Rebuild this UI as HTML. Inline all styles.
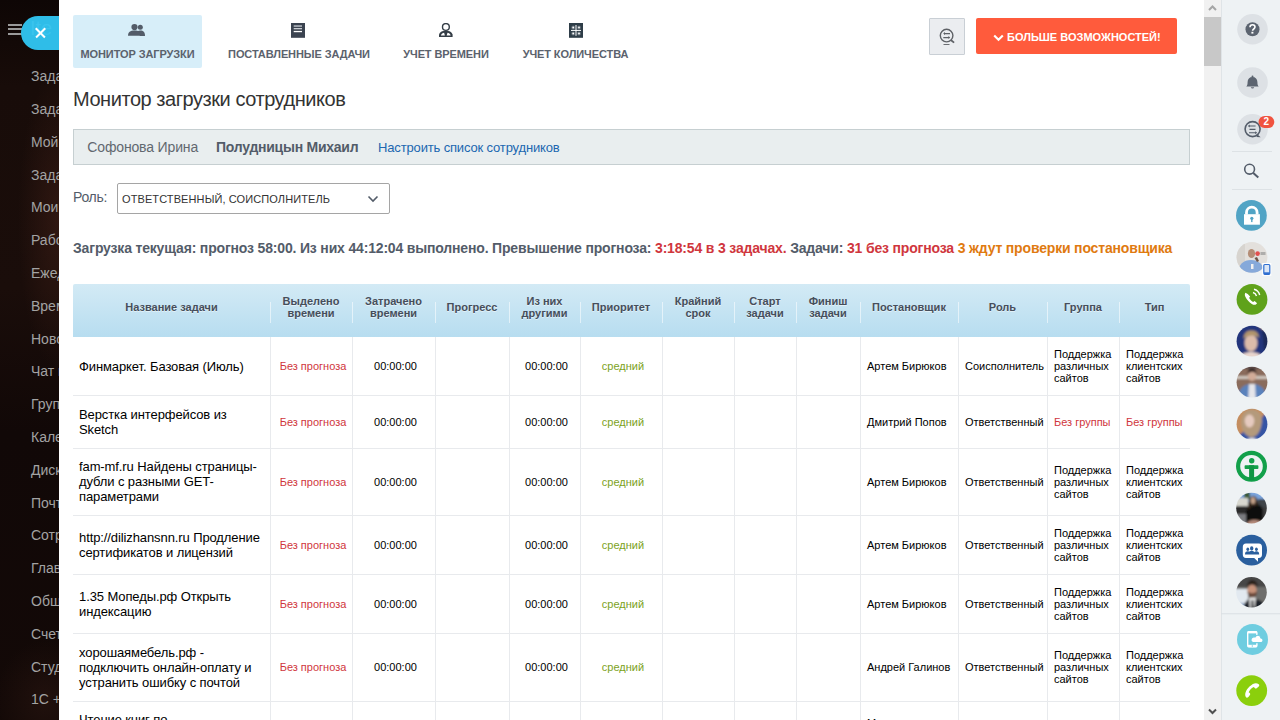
<!DOCTYPE html>
<html><head><meta charset="utf-8">
<style>
*{margin:0;padding:0;box-sizing:border-box}
html,body{width:1280px;height:720px;overflow:hidden}
body{font-family:"Liberation Sans",sans-serif;background:#130907;position:relative;color:#333}
.bg{position:absolute;left:0;top:0;width:60px;height:720px;background:radial-gradient(ellipse 40px 150px at 58px 220px,rgba(62,30,22,.6),rgba(62,30,22,0) 100%),radial-gradient(ellipse 50px 60px at 45px 700px,rgba(50,26,20,.45),rgba(50,26,20,0) 100%),linear-gradient(#0e0605 0,#180c09 12%,#1a0d0a 40%,#110807 60%,#130907 100%)}
.menu{position:absolute;left:31px;top:0;color:#a3a3a3;font-size:14px}
.menu div{position:absolute;left:0;white-space:nowrap}
.ham{position:absolute;left:8px;width:14px;height:2px;background:#9a9a9a}
.pill{position:absolute;left:21px;top:16px;width:40px;height:34px;border-radius:17px 0 0 17px;background:#2fbde8;overflow:hidden}
.pill i{position:absolute;left:9px;top:1px;font-style:normal;font-size:20px;color:#3ac4ee;letter-spacing:0px}
.pill:before,.pill:after{content:"";position:absolute;z-index:2;left:12.5px;top:16.1px;width:13px;height:1.5px;background:#fff}
.pill:before{transform:rotate(45deg)}
.pill:after{transform:rotate(-45deg)}
.panel{position:absolute;left:0;top:0;width:1204px;height:720px;clip-path:inset(0 0 0 59px);background:#fff}
.panel:before{content:"";position:absolute;left:0;top:0;width:59px;height:720px}
.sb{position:absolute;left:1204px;top:0;width:17px;height:720px;background:#f1f1f1}
.sbthumb{position:absolute;left:1204px;top:17px;width:17px;height:49px;background:#c8c8c8}
.right{position:absolute;left:1221px;top:0;width:59px;height:720px;background:#eef2f4;border-left:1px solid #dfe4e7}
.abs{position:absolute}
.tab{position:absolute;top:15px;height:53px;text-align:center;font-size:11px;letter-spacing:-0.1px;font-weight:bold;color:#5b626d;white-space:nowrap}
.tab.act{background:#d7eef9;border-radius:2px}
.tab .lbl{position:absolute;left:-20px;right:-20px;top:33px}
.title{position:absolute;left:73px;top:88px;font-size:20px;letter-spacing:-0.45px;color:#333;white-space:nowrap}
.ubar{position:absolute;left:73px;top:129px;width:1117px;height:36px;background:#e9eeef;border:1px solid #c6cfd1}
.ubar span{position:absolute;top:9px;font-size:14px;white-space:nowrap}
.role{position:absolute;left:73px;top:188.5px;font-size:14px;letter-spacing:-0.3px;color:#535c69}
.sel{position:absolute;left:117px;top:183px;width:273px;height:31px;border:1px solid #a5a5a5;border-radius:2px;background:#fff;font-size:11px;letter-spacing:0.1px;color:#333}
.stat{position:absolute;left:73px;top:240px;font-size:14px;letter-spacing:-0.17px;font-weight:bold;color:#535c69;white-space:nowrap}
.thead{position:absolute;left:73px;top:284px;width:1117px;height:53px;border-radius:2px 2px 0 0;background:linear-gradient(#d3eaf5,#b7ddf0)}
.th{position:absolute;top:284px;height:53px;padding-bottom:7px;text-shadow:0 1px 0 rgba(255,255,255,.5);display:flex;align-items:center;justify-content:center;text-align:center;font-size:11px;font-weight:bold;color:#464e5b;line-height:12px}
.thdiv{position:absolute;top:302px;width:1px;height:21px;background:rgba(255,255,255,.55)}
.td{position:absolute;display:flex;align-items:center;justify-content:center;text-align:center;font-size:11px;color:#000;line-height:12px;padding-left:4px}
.td.name{justify-content:flex-start;text-align:left;padding-left:6px;padding-right:4px;font-size:13px;line-height:15px;letter-spacing:-0.1px}
.td.red{color:#d0363d}
.td.time{color:#000}
.td.green{color:#7ca21c}
.td.grp{justify-content:flex-start;text-align:left;padding-left:7px;padding-right:2px}
.td.l{justify-content:flex-start;padding-left:7px}
.td.pers{justify-content:flex-start;text-align:left;padding-left:7px}
.td.pers2{justify-content:flex-start;text-align:left;padding-left:6px}
.rowline{position:absolute;left:73px;width:1117px;height:1px;background:#e8eaed}
.vline{position:absolute;top:337px;width:1px;height:400px;background:#e8eaed}

</style></head><body>
<div class="bg"></div>
<div class="menu">
<div style="top:68.1px">Задачи</div>
<div style="top:100.9px">Задачи</div>
<div style="top:133.7px">Мой диск</div>
<div style="top:166.5px">Задачи</div>
<div style="top:199.3px">Мои сделки</div>
<div style="top:232.1px">Работа</div>
<div style="top:264.9px">Ежедневник</div>
<div style="top:297.7px">Время</div>
<div style="top:330.5px">Новости</div>
<div style="top:363.3px">Чат и звонки</div>
<div style="top:396.1px">Группы</div>
<div style="top:428.9px">Календарь</div>
<div style="top:461.7px">Диск</div>
<div style="top:494.5px">Почта</div>
<div style="top:527.3px">Сотрудники</div>
<div style="top:560.1px">Главная</div>
<div style="top:592.9px">Общие</div>
<div style="top:625.7px">Счета</div>
<div style="top:658.5px">Студия</div>
<div style="top:691.3px">1С + CRM</div>
</div>
<div class="ham" style="top:24px"></div>
<div class="ham" style="top:28px"></div>
<div class="ham" style="top:33px"></div>
<div class="pill"><i>Ite</i></div>
<div class="panel">
<div class="tab act" style="left:73px;width:129px">
 <svg class="abs" style="left:55px;top:9px" width="18" height="12" viewBox="0 0 18 12"><circle cx="12.3" cy="3.3" r="2.5" fill="#535c69"/><path d="M9.5 7.2c.8-.4 1.8-.6 2.8-.6 3 0 4.7 1.6 4.7 5.4h-5z" fill="#535c69"/><circle cx="6.5" cy="3" r="3" fill="#fff" fill-opacity="0"/><circle cx="6.5" cy="3.1" r="3.1" fill="#535c69"/><path d="M0 11.8c0-3.8 2.2-5.3 6.5-5.3s6.5 1.5 6.5 5.3z" fill="#535c69"/></svg>
 <div class="lbl">МОНИТОР ЗАГРУЗКИ</div></div>
<div class="tab" style="left:222px;width:154px">
 <svg class="abs" style="left:69px;top:8px" width="14" height="15" viewBox="0 0 14 15"><rect x="0" y="0" width="14" height="14.8" fill="#3b4350"/><rect x="2.7" y="2.3" width="8.3" height="1.5" fill="#b9bec5"/><rect x="2.7" y="5" width="8.3" height="1.3" fill="#c9cdd2"/><rect x="2.7" y="7.9" width="8.3" height="1.3" fill="#fff"/></svg>
 <div class="lbl">ПОСТАВЛЕННЫЕ ЗАДАЧИ</div></div>
<div class="tab" style="left:397px;width:98px">
 <svg class="abs" style="left:42px;top:8px" width="14" height="15" viewBox="0 0 14 15"><circle cx="6.9" cy="4" r="3.4" fill="none" stroke="#343d46" stroke-width="1.4"/><path d="M0 14v-2.6C.8 9.6 2.5 8.3 4.5 8.1h4.6c2 .2 3.7 1.5 4.5 3.3V14z" fill="#343d46"/><path d="M1.9 12.4c.6-1.5 1.8-2.4 3.2-2.6l.8 2.6zM11.7 12.4c-.6-1.5-1.8-2.4-3.2-2.6l-.8 2.6z" fill="#fff"/></svg>
 <div class="lbl">УЧЕТ ВРЕМЕНИ</div></div>
<div class="tab" style="left:516px;width:119px">
 <svg class="abs" style="left:53px;top:8px" width="14" height="15" viewBox="0 0 14 15"><rect x="0" y="0" width="14" height="14.8" fill="#2e3d48"/><rect x="6.5" y="2" width="1" height="10.8" fill="#fff"/><rect x="2" y="6.9" width="10" height="1" fill="#fff"/><circle cx="4.2" cy="4.5" r="1.9" fill="#fff" fill-opacity=".25"/><circle cx="10" cy="4.5" r="1.9" fill="#fff" fill-opacity=".25"/><circle cx="4.2" cy="10.5" r="1.9" fill="#fff" fill-opacity=".25"/><circle cx="10" cy="10.5" r="1.9" fill="#fff" fill-opacity=".25"/><circle cx="4.2" cy="4.5" r=".9" fill="#fff"/><circle cx="10" cy="4.5" r=".9" fill="#fff"/><circle cx="4.2" cy="10.5" r=".9" fill="#fff"/><circle cx="10" cy="10.5" r=".9" fill="#fff"/></svg>
 <div class="lbl">УЧЕТ КОЛИЧЕСТВА</div></div>
<div class="abs" style="left:929px;top:18px;width:36px;height:37px;background:#ebedf0;border:1px solid #c9cfd5;border-radius:1px">
 <svg class="abs" style="left:0;top:0" width="36" height="37" viewBox="930 19 36 37"><circle cx="946.6" cy="35.6" r="6.3" fill="none" stroke="#5e6166" stroke-width="1.4"/><path d="M950.8 40l3.3 2.6" stroke="#5e6166" stroke-width="1.8"/><path d="M944 33.6h6M943.3 37.6h6" stroke="#5e6166" stroke-width="1.1"/><path d="M943.2 33.6l1.8-1.5v3zM950.2 37.6l-1.8-1.5v3z" fill="#5e6166"/><path d="M943.5 44.5h6" stroke="#6b6e73" stroke-width="1"/></svg>
</div>
<div class="abs" style="left:976px;top:18px;width:201px;height:36px;background:#ff5b3c;border-radius:2px;color:#fff;font-size:11px;font-weight:bold;white-space:nowrap">
 <svg class="abs" style="left:16.5px;top:15.5px" width="11" height="8" viewBox="0 0 11 8"><path d="M1.2 1.5l4.3 4.3 4.3-4.3" stroke="#fff" stroke-width="2.1" fill="none"/></svg>
 <span class="abs" style="left:31px;top:13px">БОЛЬШЕ ВОЗМОЖНОСТЕЙ!</span>
</div>
<div class="title">Монитор загрузки сотрудников</div>
<div class="ubar">
 <span style="left:13.3px;color:#62686f;letter-spacing:-0.15px">Софонова Ирина</span>
 <span style="left:142px;font-weight:bold;color:#535c69;letter-spacing:-0.25px">Полудницын Михаил</span>
 <span style="left:304px;font-size:13px;top:10px;color:#2067b0;letter-spacing:-0.15px">Настроить список сотрудников</span>
</div>
<div class="role">Роль:</div>
<div class="sel"><span class="abs" style="left:4px;top:9px">ОТВЕТСТВЕННЫЙ, СОИСПОЛНИТЕЛЬ</span>
 <svg class="abs" style="left:249px;top:11px" width="12" height="8" viewBox="0 0 12 8"><path d="M1.5 1.5l4.5 4.5 4.5-4.5" stroke="#535c69" stroke-width="1.6" fill="none"/></svg>
</div>
<div class="stat">Загрузка текущая: прогноз 58:00. Из них 44:12:04 выполнено. Превышение прогноза: <span style="color:#d0363d">3:18:54 в 3 задачах.</span> Задачи: <span style="color:#d0363d">31 без прогноза</span> <span style="color:#e07a10">3 ждут проверки постановщика</span></div>

<div class="thead"></div>
<div class="th" style="left:73px;width:197px">Название задачи</div>
<div class="th" style="left:270px;width:82px">Выделено<br>времени</div>
<div class="thdiv" style="left:270px"></div>
<div class="th" style="left:352px;width:83px">Затрачено<br>времени</div>
<div class="thdiv" style="left:352px"></div>
<div class="th" style="left:435px;width:74px">Прогресс</div>
<div class="thdiv" style="left:435px"></div>
<div class="th" style="left:509px;width:71px">Из них<br>другими</div>
<div class="thdiv" style="left:509px"></div>
<div class="th" style="left:580px;width:82px">Приоритет</div>
<div class="thdiv" style="left:580px"></div>
<div class="th" style="left:662px;width:72px">Крайний<br>срок</div>
<div class="thdiv" style="left:662px"></div>
<div class="th" style="left:734px;width:62px">Старт<br>задачи</div>
<div class="thdiv" style="left:734px"></div>
<div class="th" style="left:796px;width:64px">Финиш<br>задачи</div>
<div class="thdiv" style="left:796px"></div>
<div class="th" style="left:860px;width:98px">Постановщик</div>
<div class="thdiv" style="left:860px"></div>
<div class="th" style="left:958px;width:89px">Роль</div>
<div class="thdiv" style="left:958px"></div>
<div class="th" style="left:1047px;width:72px">Группа</div>
<div class="thdiv" style="left:1047px"></div>
<div class="th" style="left:1119px;width:71px">Тип</div>
<div class="thdiv" style="left:1119px"></div>
<div class="td name" style="left:73px;top:337px;width:197px;height:58px"><span>Финмаркет. Базовая (Июль)</span></div>
<div class="td red" style="left:270px;top:337px;width:82px;height:58px"><span>Без прогноза</span></div>
<div class="td time" style="left:352px;top:337px;width:83px;height:58px"><span>00:00:00</span></div>
<div class="td " style="left:435px;top:337px;width:74px;height:58px"><span></span></div>
<div class="td time" style="left:509px;top:337px;width:71px;height:58px"><span>00:00:00</span></div>
<div class="td green" style="left:580px;top:337px;width:82px;height:58px"><span>средний</span></div>
<div class="td " style="left:662px;top:337px;width:72px;height:58px"><span></span></div>
<div class="td " style="left:734px;top:337px;width:62px;height:58px"><span></span></div>
<div class="td " style="left:796px;top:337px;width:64px;height:58px"><span></span></div>
<div class="td pers" style="left:860px;top:337px;width:98px;height:58px"><span>Артем Бирюков</span></div>
<div class="td pers" style="left:958px;top:337px;width:89px;height:58px"><span>Соисполнитель</span></div>
<div class="td grp" style="left:1047px;top:337px;width:72px;height:58px"><span>Поддержка различных сайтов</span></div>
<div class="td grp" style="left:1119px;top:337px;width:71px;height:58px"><span>Поддержка клиентских сайтов</span></div>
<div class="rowline" style="top:395px"></div>
<div class="td name" style="left:73px;top:395px;width:197px;height:53px"><span>Верстка интерфейсов из Sketch</span></div>
<div class="td red" style="left:270px;top:395px;width:82px;height:53px"><span>Без прогноза</span></div>
<div class="td time" style="left:352px;top:395px;width:83px;height:53px"><span>00:00:00</span></div>
<div class="td " style="left:435px;top:395px;width:74px;height:53px"><span></span></div>
<div class="td time" style="left:509px;top:395px;width:71px;height:53px"><span>00:00:00</span></div>
<div class="td green" style="left:580px;top:395px;width:82px;height:53px"><span>средний</span></div>
<div class="td " style="left:662px;top:395px;width:72px;height:53px"><span></span></div>
<div class="td " style="left:734px;top:395px;width:62px;height:53px"><span></span></div>
<div class="td " style="left:796px;top:395px;width:64px;height:53px"><span></span></div>
<div class="td pers" style="left:860px;top:395px;width:98px;height:53px"><span>Дмитрий Попов</span></div>
<div class="td pers" style="left:958px;top:395px;width:89px;height:53px"><span>Ответственный</span></div>
<div class="td red l" style="left:1047px;top:395px;width:72px;height:53px"><span>Без группы</span></div>
<div class="td red l" style="left:1119px;top:395px;width:71px;height:53px"><span>Без группы</span></div>
<div class="rowline" style="top:448px"></div>
<div class="td name" style="left:73px;top:448px;width:197px;height:67px"><span>fam-mf.ru Найдены страницы-дубли с разными GET-параметрами</span></div>
<div class="td red" style="left:270px;top:448px;width:82px;height:67px"><span>Без прогноза</span></div>
<div class="td time" style="left:352px;top:448px;width:83px;height:67px"><span>00:00:00</span></div>
<div class="td " style="left:435px;top:448px;width:74px;height:67px"><span></span></div>
<div class="td time" style="left:509px;top:448px;width:71px;height:67px"><span>00:00:00</span></div>
<div class="td green" style="left:580px;top:448px;width:82px;height:67px"><span>средний</span></div>
<div class="td " style="left:662px;top:448px;width:72px;height:67px"><span></span></div>
<div class="td " style="left:734px;top:448px;width:62px;height:67px"><span></span></div>
<div class="td " style="left:796px;top:448px;width:64px;height:67px"><span></span></div>
<div class="td pers" style="left:860px;top:448px;width:98px;height:67px"><span>Артем Бирюков</span></div>
<div class="td pers" style="left:958px;top:448px;width:89px;height:67px"><span>Ответственный</span></div>
<div class="td grp" style="left:1047px;top:448px;width:72px;height:67px"><span>Поддержка различных сайтов</span></div>
<div class="td grp" style="left:1119px;top:448px;width:71px;height:67px"><span>Поддержка клиентских сайтов</span></div>
<div class="rowline" style="top:515px"></div>
<div class="td name" style="left:73px;top:515px;width:197px;height:59px"><span>http://dilizhansnn.ru Продление сертификатов и лицензий</span></div>
<div class="td red" style="left:270px;top:515px;width:82px;height:59px"><span>Без прогноза</span></div>
<div class="td time" style="left:352px;top:515px;width:83px;height:59px"><span>00:00:00</span></div>
<div class="td " style="left:435px;top:515px;width:74px;height:59px"><span></span></div>
<div class="td time" style="left:509px;top:515px;width:71px;height:59px"><span>00:00:00</span></div>
<div class="td green" style="left:580px;top:515px;width:82px;height:59px"><span>средний</span></div>
<div class="td " style="left:662px;top:515px;width:72px;height:59px"><span></span></div>
<div class="td " style="left:734px;top:515px;width:62px;height:59px"><span></span></div>
<div class="td " style="left:796px;top:515px;width:64px;height:59px"><span></span></div>
<div class="td pers" style="left:860px;top:515px;width:98px;height:59px"><span>Артем Бирюков</span></div>
<div class="td pers" style="left:958px;top:515px;width:89px;height:59px"><span>Ответственный</span></div>
<div class="td grp" style="left:1047px;top:515px;width:72px;height:59px"><span>Поддержка различных сайтов</span></div>
<div class="td grp" style="left:1119px;top:515px;width:71px;height:59px"><span>Поддержка клиентских сайтов</span></div>
<div class="rowline" style="top:574px"></div>
<div class="td name" style="left:73px;top:574px;width:197px;height:59px"><span>1.35 Мопеды.рф Открыть индексацию</span></div>
<div class="td red" style="left:270px;top:574px;width:82px;height:59px"><span>Без прогноза</span></div>
<div class="td time" style="left:352px;top:574px;width:83px;height:59px"><span>00:00:00</span></div>
<div class="td " style="left:435px;top:574px;width:74px;height:59px"><span></span></div>
<div class="td time" style="left:509px;top:574px;width:71px;height:59px"><span>00:00:00</span></div>
<div class="td green" style="left:580px;top:574px;width:82px;height:59px"><span>средний</span></div>
<div class="td " style="left:662px;top:574px;width:72px;height:59px"><span></span></div>
<div class="td " style="left:734px;top:574px;width:62px;height:59px"><span></span></div>
<div class="td " style="left:796px;top:574px;width:64px;height:59px"><span></span></div>
<div class="td pers" style="left:860px;top:574px;width:98px;height:59px"><span>Артем Бирюков</span></div>
<div class="td pers" style="left:958px;top:574px;width:89px;height:59px"><span>Ответственный</span></div>
<div class="td grp" style="left:1047px;top:574px;width:72px;height:59px"><span>Поддержка различных сайтов</span></div>
<div class="td grp" style="left:1119px;top:574px;width:71px;height:59px"><span>Поддержка клиентских сайтов</span></div>
<div class="rowline" style="top:633px"></div>
<div class="td name" style="left:73px;top:633px;width:197px;height:68px"><span>хорошаямебель.рф - подключить онлайн-оплату и устранить ошибку с почтой</span></div>
<div class="td red" style="left:270px;top:633px;width:82px;height:68px"><span>Без прогноза</span></div>
<div class="td time" style="left:352px;top:633px;width:83px;height:68px"><span>00:00:00</span></div>
<div class="td " style="left:435px;top:633px;width:74px;height:68px"><span></span></div>
<div class="td time" style="left:509px;top:633px;width:71px;height:68px"><span>00:00:00</span></div>
<div class="td green" style="left:580px;top:633px;width:82px;height:68px"><span>средний</span></div>
<div class="td " style="left:662px;top:633px;width:72px;height:68px"><span></span></div>
<div class="td " style="left:734px;top:633px;width:62px;height:68px"><span></span></div>
<div class="td " style="left:796px;top:633px;width:64px;height:68px"><span></span></div>
<div class="td pers" style="left:860px;top:633px;width:98px;height:68px"><span>Андрей Галинов</span></div>
<div class="td pers" style="left:958px;top:633px;width:89px;height:68px"><span>Ответственный</span></div>
<div class="td grp" style="left:1047px;top:633px;width:72px;height:68px"><span>Поддержка различных сайтов</span></div>
<div class="td grp" style="left:1119px;top:633px;width:71px;height:68px"><span>Поддержка клиентских сайтов</span></div>
<div class="rowline" style="top:701px"></div>
<div class="td name" style="left:73px;top:701px;width:197px;height:67px"><span>Чтение книг по программированию и веб-разработке</span></div>
<div class="td red" style="left:270px;top:701px;width:82px;height:67px"><span>Без прогноза</span></div>
<div class="td time" style="left:352px;top:701px;width:83px;height:67px"><span>00:00:00</span></div>
<div class="td " style="left:435px;top:701px;width:74px;height:67px"><span></span></div>
<div class="td time" style="left:509px;top:701px;width:71px;height:67px"><span>00:00:00</span></div>
<div class="td green" style="left:580px;top:701px;width:82px;height:67px"><span>средний</span></div>
<div class="td " style="left:662px;top:701px;width:72px;height:67px"><span></span></div>
<div class="td " style="left:734px;top:701px;width:62px;height:67px"><span></span></div>
<div class="td " style="left:796px;top:701px;width:64px;height:67px"><span></span></div>
<div class="td pers" style="left:860px;top:701px;width:98px;height:67px"><span>Михаил Полудницын Михаил</span></div>
<div class="rowline" style="top:768px"></div>
<div class="vline" style="left:270px"></div>
<div class="vline" style="left:352px"></div>
<div class="vline" style="left:435px"></div>
<div class="vline" style="left:509px"></div>
<div class="vline" style="left:580px"></div>
<div class="vline" style="left:662px"></div>
<div class="vline" style="left:734px"></div>
<div class="vline" style="left:796px"></div>
<div class="vline" style="left:860px"></div>
<div class="vline" style="left:958px"></div>
<div class="vline" style="left:1047px"></div>
<div class="vline" style="left:1119px"></div>
</div>
<div class="sb"><svg class="abs" style="left:4px;top:4px" width="9" height="8" viewBox="0 0 9 8"><path d="M1 6l3.5-3.5L8 6" stroke="#a6a6a6" stroke-width="2" fill="none"/></svg><svg class="abs" style="left:4px;top:707px" width="9" height="9" viewBox="0 0 9 9"><path d="M1 2.5l3.5 3.5L8 2.5" stroke="#505050" stroke-width="2" fill="none"/></svg></div>
<div class="sbthumb"></div>
<div class="right">
<svg class="abs" style="left:-1px;top:0" width="59" height="720" viewBox="1221 0 59 720">
<defs>
<clipPath id="c1"><circle cx="1252" cy="257.3" r="15.4"/></clipPath>
<clipPath id="c2"><circle cx="1252" cy="341.2" r="15.4"/></clipPath>
<clipPath id="c3"><circle cx="1252" cy="382.2" r="15.4"/></clipPath>
<clipPath id="c4"><circle cx="1252" cy="424.2" r="15.4"/></clipPath>
<clipPath id="c5"><circle cx="1251.5" cy="508.1" r="15.3"/></clipPath>
<clipPath id="c6"><circle cx="1251.5" cy="592.2" r="15.3"/></clipPath>
<filter id="bl" x="-10%" y="-10%" width="120%" height="120%"><feGaussianBlur stdDeviation="0.9"/></filter></defs>
<!-- help -->
<circle cx="1252.5" cy="29.2" r="15.3" fill="#dde1e5"/>
<circle cx="1252.5" cy="29.2" r="7" fill="#5c6470"/>
<path d="M1250 27.3c0-1.6 1.1-2.5 2.5-2.5s2.5.9 2.5 2.3c0 1.9-2.4 1.9-2.4 3.6" stroke="#fff" stroke-width="1.6" fill="none"/>
<rect x="1251.4" y="31.8" width="2" height="1.8" fill="#fff"/>
<!-- bell -->
<circle cx="1252.5" cy="82.5" r="15.3" fill="#dde1e5"/>
<path d="M1246.3 86.5c1-1 1.3-2.2 1.3-4.5 0-3 1.9-5 4.9-5s4.9 2 4.9 5c0 2.3.3 3.5 1.3 4.5z" fill="#5c6470"/>
<path d="M1250.8 87.3a1.8 1.8 0 0 0 3.4 0z" fill="#5c6470"/>
<circle cx="1252.5" cy="76.6" r="1" fill="#5c6470"/>
<!-- chat -->
<circle cx="1252.5" cy="129.2" r="15.3" fill="#dde1e5"/>
<circle cx="1252.6" cy="129.1" r="7.5" fill="none" stroke="#535c69" stroke-width="1.6"/>
<path d="M1257.5 134.6l3.2 2.6-4.3-.3z" fill="#535c69"/>
<path d="M1249.2 126h6.4M1249.5 129.4h6M1249 132.7h6.8" stroke="#535c69" stroke-width="1.1" fill="none"/>
<path d="M1247.8 126l2-1.5v3zM1257.2 132.7l-2-1.5v3z" fill="#535c69"/>
<rect x="1258.5" y="116" width="15.8" height="12" rx="6" fill="#f0533f"/>
<text x="1266.4" y="125.4" font-size="10" font-weight="bold" fill="#fff" text-anchor="middle" font-family="Liberation Sans">2</text>
<line x1="1232" y1="151.5" x2="1272" y2="151.5" stroke="#dde2e5" stroke-width="1"/>
<!-- search -->
<circle cx="1249.6" cy="169.2" r="4.9" fill="none" stroke="#535c69" stroke-width="1.6"/>
<path d="M1253.3 173l5 4.5" stroke="#535c69" stroke-width="2"/>
<line x1="1232" y1="189.5" x2="1272" y2="189.5" stroke="#dde2e5" stroke-width="1"/>
<!-- lock -->
<circle cx="1251.4" cy="215.4" r="15.4" fill="#51a4c5"/>
<path d="M1246.5 214.5v-2a5.3 5.3 0 0 1 10.6 0v2" stroke="#fff" stroke-width="2.8" fill="none"/>
<rect x="1244" y="214.2" width="15.9" height="10.5" fill="#fff"/>
<circle cx="1251.8" cy="218.3" r="1.6" fill="#51a4c5"/>
<rect x="1251.1" y="218.5" width="1.4" height="3.6" fill="#51a4c5"/>
<!-- avatar1 -->
<g clip-path="url(#c1)">
<rect x="1236" y="241" width="32" height="33" fill="#e3e0dc"/>
<rect x="1236" y="241" width="9" height="33" fill="#d7d4cf"/>
<path d="M1238 274c0-9 5-14 13-14s13 5 14 14z" fill="#86a9da"/>
<ellipse cx="1251.5" cy="253.5" rx="3.6" ry="4.6" fill="#b48d76"/>
<circle cx="1257.6" cy="253.6" r="2.3" fill="#e2504e"/>
<rect x="1260.5" y="252" width="5" height="3" fill="#8a8a8a" fill-opacity=".6"/>
<path d="M1254.5 258l2.5 4 2-1-2-4z" fill="#6e5548"/>
<rect x="1251" y="264" width="2.5" height="5" fill="#f0f0f0"/>
</g>
<rect x="1262.2" y="263" width="9.1" height="12.8" fill="#fff"/>
<rect x="1263.8" y="264.5" width="6" height="9.8" rx="1" fill="#dbe6f6" stroke="#2f6fd0" stroke-width="1.2"/>
<rect x="1264" y="272.3" width="5.6" height="2" fill="#2f6fd0"/>
<!-- green phone -->
<circle cx="1252" cy="299.4" r="15.4" fill="#5fa21b"/>
<path d="M1245.5 292.8c-.8.8-1 2.3 0 4.3 1.3 2.7 3.6 5.3 6.3 6.8 2 1.1 3.4 1.1 4.3.3l1-1-2.5-2.3-1.5 1c-1.5-.8-3.2-2.6-4-4l1-1.5-2.4-2.5z" fill="#fff"/>
<path d="M1253 292.5a5 5 0 0 1 3.5 3.5M1254 289.3a8 8 0 0 1 5.7 5.7" stroke="#fff" stroke-width="1.4" fill="none"/>
<!-- avatar2 -->
<g clip-path="url(#c2)"><g filter="url(#bl)">
<rect x="1234" y="323" width="36" height="37" fill="#22367c"/>
<path d="M1255 323h15v14c-3 0-6-4-8-8z" fill="#a88a5c"/>
<path d="M1262 330l8-2v20l-6 2z" fill="#1c2a58"/>
<ellipse cx="1251" cy="343" rx="6.5" ry="8.5" fill="#dcbcaa"/>
<path d="M1243.5 339c0-6 3.5-8.5 8-8.5s7.5 2.5 7.5 7.5c-1.5-2-5-2.8-8-2.5s-5.5 1.5-7.5 3.5z" fill="#b0946c"/>
<path d="M1238 360c2-6 7-8 13-8s11 2 13 8z" fill="#e8d4cc"/>
</g></g>
<!-- avatar3 -->
<g clip-path="url(#c3)"><g filter="url(#bl)">
<rect x="1234" y="364" width="36" height="37" fill="#8a6c5c"/>
<rect x="1234" y="364" width="36" height="5" fill="#5e4e4c"/>
<rect x="1234" y="376" width="36" height="3" fill="#cfc6bd"/>
<ellipse cx="1252" cy="376" rx="4.2" ry="5" fill="#d2ac98"/>
<path d="M1247.5 374.5c0-4.5 2-6.5 4.5-6.5s4.5 2 4.5 6c-1.2-1.5-3-2-4.5-2s-3.2.7-4.5 2.5z" fill="#3a2a26"/>
<path d="M1237 401c1-12 6-17 15-17s14 5 15 17z" fill="#5a82bc"/>
<path d="M1249 384h6l1 17h-8z" fill="#e6e6ea"/>
</g></g>
<!-- avatar4 -->
<g clip-path="url(#c4)"><g filter="url(#bl)">
<rect x="1234" y="406" width="36" height="37" fill="#c48d5e"/>
<path d="M1270 406v37h-36c3-8 10-12 18-16 7-4 12-12 18-21z" fill="#3454a4"/>
<path d="M1241 423c0-9 4-13.5 10.5-13.5s10.5 4 10.5 12c-1 7-3 14-10 16-7-1-10-7-11-14.5z" fill="#b49a7c"/>
<ellipse cx="1249.5" cy="421" rx="4.8" ry="6.5" fill="#e6cbc0"/>
<ellipse cx="1252" cy="442" rx="6" ry="4" fill="#eeeef2"/>
</g></g>
<!-- green logo -->
<circle cx="1251.5" cy="466.2" r="13.4" fill="none" stroke="#12a04a" stroke-width="4.2"/>
<circle cx="1251.7" cy="460.7" r="2.7" fill="#12a04a"/>
<rect x="1244.6" y="465.2" width="13.8" height="3.8" rx=".8" fill="#12a04a"/>
<rect x="1249.1" y="465.2" width="5" height="15" fill="#0f9544"/>
<!-- avatar5 -->
<g clip-path="url(#c5)"><g filter="url(#bl)">
<rect x="1234" y="490" width="36" height="36" fill="#3c3c3c"/>
<rect x="1234" y="490" width="36" height="12" fill="#7ba4dc"/>
<rect x="1244" y="492" width="6" height="8" fill="#3c5a38"/>
<rect x="1234" y="498" width="14" height="8" fill="#d8d8d0"/>
<rect x="1258" y="499" width="12" height="8" fill="#404448"/>
<rect x="1234" y="506" width="12" height="10" fill="#2a2a2a"/>
<rect x="1234" y="514" width="14" height="12" fill="#7a7c80"/>
<path d="M1246 526v-14c0-4 2-7 6-8h5c4 1 6 4 6 8v14z" fill="#0e0e0e"/>
<path d="M1248 510c0-9 2-14 5-14s5 3 5 8l-2 2h-4z" fill="#35281f"/>
<ellipse cx="1253" cy="500.5" rx="2.4" ry="3.4" fill="#c2a088"/>
<path d="M1246 526c1-4 3-6 8-6s7 1 8 3v3z" fill="#b48a7a"/>
</g></g>
<!-- group chat -->
<circle cx="1251.6" cy="550.2" r="15.4" fill="#2a5f9e"/>
<path d="M1246 543.6h12.8c2.2 0 3.2 1.2 3.2 3.4v7.6c0 2.2-1 3.4-3.2 3.4h-.8v3.7l-3.8-3.7h-8.2c-2.2 0-3.2-1.2-3.2-3.4v-7.6c0-2.2 1-3.4 3.2-3.4z" fill="#fff"/>
<g fill="#2a5f9e"><ellipse cx="1247.8" cy="549.2" rx="1.4" ry="1.8"/><ellipse cx="1251.7" cy="548.4" rx="1.7" ry="2.1"/><ellipse cx="1256.4" cy="549.2" rx="1.4" ry="1.8"/>
<path d="M1245 554.6c0-2.4.9-3.4 2.8-3.4s2.8 1 2.8 3.4zM1248.8 554.6c0-2.8 1.1-3.8 2.9-3.8s2.9 1 2.9 3.8zM1253.6 554.6c0-2.4.9-3.4 2.8-3.4s2.8 1 2.8 3.4z"/></g>
<!-- avatar6 -->
<g clip-path="url(#c6)"><g filter="url(#bl)">
<rect x="1234" y="574" width="36" height="36" fill="#6e6e6c"/>
<rect x="1234" y="574" width="36" height="13" fill="#474746"/>
<rect x="1234" y="589" width="14" height="14" fill="#e2e9f0"/>
<rect x="1234" y="603" width="10" height="8" fill="#9ab0d0"/>
<path d="M1243 611c1-9 5-13 9-13s11 3 14 8v5z" fill="#1f232a"/>
<path d="M1249 598l4-1 3 1-2 13h-4z" fill="#e6e6e6"/>
<path d="M1251.5 600h1.8l.7 11h-3.2z" fill="#23252a"/>
<ellipse cx="1252" cy="590.5" rx="4.6" ry="6" fill="#c8937a"/>
<path d="M1247.5 591c0 4 2 6.5 4.8 6.5s4.8-2.5 4.8-6.5c-1 1.5-2.8 2-4.8 2s-3.8-.5-4.8-2z" fill="#6a4a3a"/>
<path d="M1246.8 588c0-5 2.2-8 5.5-8s5.6 3 5.6 7.5c-1.2-2.2-3.2-3-5.6-3s-4.3.8-5.5 3.5z" fill="#2a221e"/>
</g></g>
<line x1="1221" y1="613.8" x2="1280" y2="613.8" stroke="#d9dfe3" stroke-width="1"/>
<!-- cyan -->
<circle cx="1252.5" cy="639.4" r="15.5" fill="#6fcde0"/>
<rect x="1247.7" y="631.6" width="9.2" height="15.2" rx="1.2" fill="none" stroke="#fff" stroke-width="1.4"/>
<rect x="1247.7" y="631.2" width="9.2" height="2.2" fill="#fff"/>
<rect x="1247.7" y="644.8" width="9.2" height="2.4" fill="#fff"/>
<circle cx="1252.3" cy="646" r=".7" fill="#6fcde0"/>
<path d="M1253 642.6h7.6a2.3 2.3 0 0 0 .3-4.6 3.1 3.1 0 0 0-5.9-.9 2.6 2.6 0 0 0-2 5.5z" fill="#fff" stroke="#6fcde0" stroke-width="1.1"/>
<!-- lime phone -->
<circle cx="1251.7" cy="690.6" r="15.4" fill="#8bcf0c"/>
<g transform="rotate(180 1252 690.5)">
<path d="M1245.3 696.8c-.9-.6-.7-1.7.2-2.5l1.8-1.5c.7-.5 1.4-.4 2 .2l.8 1c2-.7 4.5-3.2 5.2-5.3l-1-.8c-.6-.6-.7-1.3-.2-2l1.5-1.8c.8-.9 1.9-1.1 2.5-.2 1.6 2.5.2 6.8-3.6 10.5s-6.8 4.2-9.2 2.4z" fill="#fff"/>
</g>
</svg>

</div>
</body></html>
